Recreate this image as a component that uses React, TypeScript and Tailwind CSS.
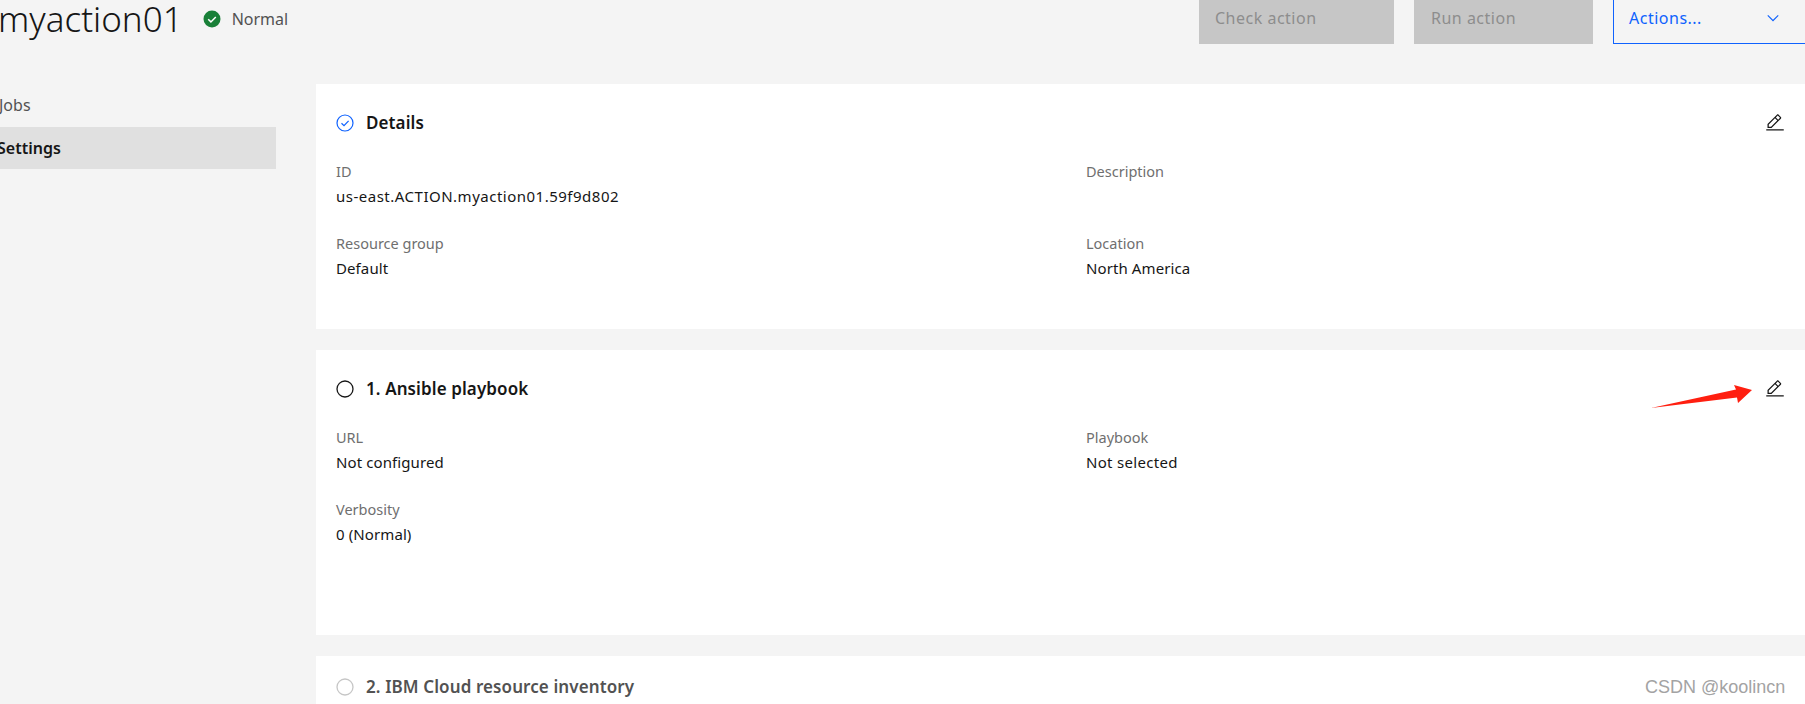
import React from 'react';

type FieldData = { label: string; value: string; valueClass?: string };

const PencilIcon: React.FC = () => (
  <svg width="20" height="20" viewBox="0 0 32 32" fill="#161616">
    <rect x="2" y="26" width="28" height="2" />
    <path d="M25.4,9c0.8-0.8,0.8-2,0-2.8l-3.6-3.6c-0.8-0.8-2-0.8-2.8,0l-15,15V24h6.4L25.4,9z M20.4,4L24,7.6l-3,3L17.4,7L20.4,4z M6,22v-3.6l10-10l3.6,3.6l-10,10H6z" />
  </svg>
);

const Field: React.FC<FieldData> = ({ label, value, valueClass }) => (
  <div className="h-[72px]">
    <div className="text-[14.5px] leading-[18px] text-[#6f6f6f]">{label}</div>
    <div className={`mt-[6px] text-[15px] leading-[20px] text-[#161616] ${valueClass ?? 'tracking-[0.1px]'}`}>
      {value}
    </div>
  </div>
);

const Card: React.FC<{
  title: string;
  icon: React.ReactNode;
  boxClass: string;
  left: FieldData[];
  right: FieldData[];
  dim?: boolean;
  pencil?: boolean;
}> = ({ title, icon, boxClass, left, right, dim, pencil = true }) => (
  <section className={`bg-white pl-[20px] pr-[20px] shrink-0 ${boxClass}`}>
    <div className="flex items-center h-[22px]">
      <div className="w-[30px] flex items-center">{icon}</div>
      <h2
        className={`text-[17px] tracking-[0.1px] font-semibold leading-[22px] ${
          dim ? 'text-[#525252]' : 'text-[#161616]'
        }`}
      >
        {title}
      </h2>
      {pencil && (
        <div className="ml-auto">
          <PencilIcon />
        </div>
      )}
    </div>
    <div className="grid grid-cols-[749px_1fr] mt-[28px]">
      <div>
        {left.map((f) => (
          <Field key={f.label} {...f} />
        ))}
      </div>
      <div className="pl-[1px]">
        {right.map((f) => (
          <Field key={f.label} {...f} />
        ))}
      </div>
    </div>
  </section>
);

export default function App() {
  return (
    <div
      className="relative w-[1805px] h-[704px] overflow-hidden bg-[#f4f4f4]"
      style={{ fontFamily: '"Noto Sans", Roboto, sans-serif' }}
    >
      {/* top bar, scrolled so its top is cut off */}
      <header className="flex h-[84px] items-start">
        <h1 className="ml-[-2px] mt-[-3px] text-[35px] leading-[44px] font-light text-[#161616]">myaction01</h1>
        <svg className="ml-[20px] mt-[10px]" width="18" height="18" viewBox="0 0 18 18">
          <circle cx="9" cy="9" r="8.5" fill="#198038" />
          <path d="M5.2 9.2l2.7 2.7 4.9-5" fill="none" stroke="#fff" strokeWidth="1.5" />
        </svg>
        <span className="ml-[11px] mt-[8px] text-[16px] leading-[22px] text-[#525252]">Normal</span>
        <div className="ml-auto flex h-[44px]">
          <div className="w-[195px] h-full bg-[#c6c6c6] pl-[16px] pt-[6px] text-[16px] tracking-[0.5px] leading-[24px] text-[#8d8d8d]">
            Check action
          </div>
          <div className="ml-[20px] w-[179px] h-full bg-[#c6c6c6] pl-[17px] pt-[6px] text-[16px] tracking-[0.5px] leading-[24px] text-[#8d8d8d]">
            Run action
          </div>
          <div className="ml-[20px] w-[192px] h-full flex items-start border-l border-b border-[#0f62fe] pl-[15px] pt-[6px] text-[16px] tracking-[0.5px] leading-[24px] text-[#0f62fe]">
            Actions...
            <svg className="ml-auto mr-[23px] mt-[3px]" width="18" height="18" viewBox="0 0 32 32" fill="#0f62fe">
              <path d="M16 22L6 12l1.4-1.4 8.6 8.6 8.6-8.6L26 12z" />
            </svg>
          </div>
        </div>
      </header>

      <div className="flex">
        <nav className="w-[276px] shrink-0">
          <div className="h-[43px] pb-[2px] flex items-center ml-[-1px] text-[16px] text-[#525252]">Jobs</div>
          <div className="h-[42px] flex items-center bg-[#e0e0e0] text-[16px] font-semibold text-[#161616]">
            <span className="ml-[-3px]">Settings</span>
          </div>
        </nav>

        <main className="ml-[40px] flex-1 flex flex-col gap-[21px]">
          <Card
            title="Details"
            boxClass="h-[245px] pt-[28px]"
            icon={
              <svg width="18" height="18" viewBox="0 0 18 18" fill="none" stroke="#0f62fe">
                <circle cx="9" cy="9" r="8" strokeWidth="1.2" />
                <path d="M5.5 9.3l2.5 2.4 4.6-4.9" strokeWidth="1.2" />
              </svg>
            }
            left={[
              { label: 'ID', value: 'us-east.ACTION.myaction01.59f9d802', valueClass: 'tracking-[0.5px]' },
              { label: 'Resource group', value: 'Default' },
            ]}
            right={[
              { label: 'Description', value: '' },
              { label: 'Location', value: 'North America' },
            ]}
          />
          <Card
            title="1. Ansible playbook"
            boxClass="h-[285px] pt-[28px]"
            icon={
              <svg width="18" height="18" viewBox="0 0 18 18" fill="none" stroke="#161616">
                <circle cx="9" cy="9" r="8" strokeWidth="1.3" />
              </svg>
            }
            left={[
              { label: 'URL', value: 'Not configured' },
              { label: 'Verbosity', value: '0 (Normal)' },
            ]}
            right={[{ label: 'Playbook', value: 'Not selected', valueClass: 'tracking-[0.3px]' }]}
          />
          <Card
            title="2. IBM Cloud resource inventory"
            boxClass="h-[120px] pt-[20px]"
            dim
            pencil={false}
            icon={
              <svg width="18" height="18" viewBox="0 0 18 18" fill="none" stroke="#c6c6c6">
                <circle cx="9" cy="9" r="8" strokeWidth="1.3" />
              </svg>
            }
            left={[]}
            right={[]}
          />
        </main>
      </div>

      {/* red annotation arrow on top of the screenshot */}
      <svg className="absolute left-[1650px] top-[380px]" width="110" height="32" viewBox="1650 380 110 32">
        <polygon points="1651,408 1736,389.5 1734,385 1752,390 1738,403 1737,397.5" fill="#ff1f10" />
      </svg>
      <div
        className="absolute left-[1645px] top-[676px] text-[18px] leading-[22px] text-[#a3a3a3]"
        style={{ fontFamily: '"Liberation Sans", sans-serif' }}
      >
        CSDN @koolincn
      </div>
    </div>
  );
}
